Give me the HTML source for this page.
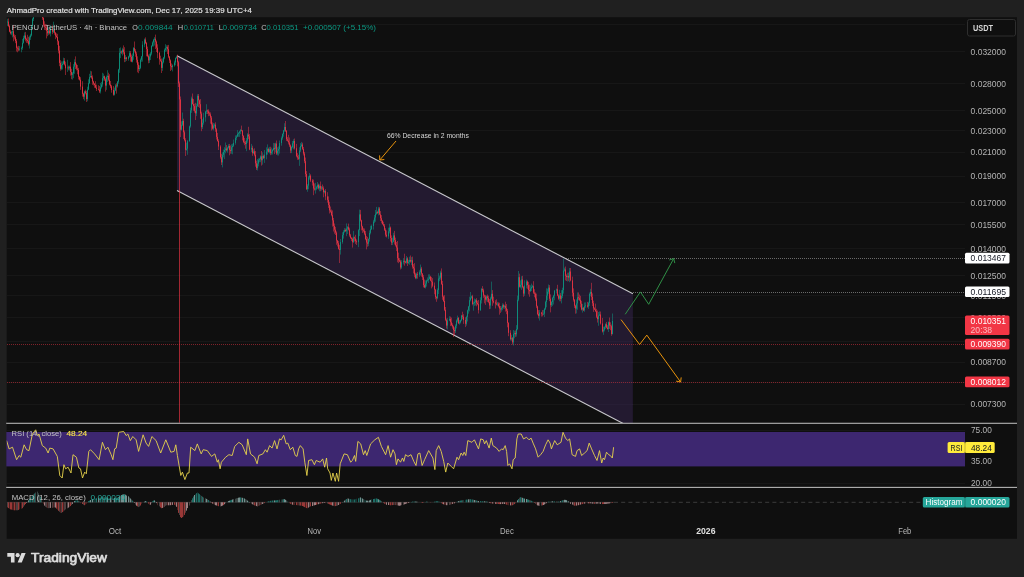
<!DOCTYPE html>
<html lang="en"><head><meta charset="utf-8"><title>PENGU / TetherUS 4h chart</title>
<style>html,body{margin:0;padding:0;background:#202020;}body{width:1024px;height:577px;overflow:hidden;position:relative;font-family:"Liberation Sans", Arial, sans-serif;}</style>
</head><body>
<svg width="1024" height="577" viewBox="0 0 1024 577" style="position:absolute;left:0;top:0;display:block;will-change:transform" font-family='"Liberation Sans", Arial, sans-serif'>
<rect x="0" y="0" width="1024" height="577" fill="#202020"/>
<rect x="6.7" y="17.2" width="1010.3" height="521.5999999999999" fill="#0f0f0f"/>
<defs>
<clipPath id="cm"><rect x="6.7" y="17.2" width="958.3" height="405.8"/></clipPath>
<clipPath id="cr"><rect x="6.7" y="424" width="958.3" height="63.5"/></clipPath>
</defs>
<g stroke="#171717" stroke-width="1" shape-rendering="crispEdges">
<line x1="6.7" x2="965" y1="24.0" y2="24.0"/>
<line x1="6.7" x2="965" y1="51.8" y2="51.8"/>
<line x1="6.7" x2="965" y1="83.6" y2="83.6"/>
<line x1="6.7" x2="965" y1="110.7" y2="110.7"/>
<line x1="6.7" x2="965" y1="130.5" y2="130.5"/>
<line x1="6.7" x2="965" y1="152.2" y2="152.2"/>
<line x1="6.7" x2="965" y1="176.1" y2="176.1"/>
<line x1="6.7" x2="965" y1="202.6" y2="202.6"/>
<line x1="6.7" x2="965" y1="224.6" y2="224.6"/>
<line x1="6.7" x2="965" y1="248.9" y2="248.9"/>
<line x1="6.7" x2="965" y1="275.9" y2="275.9"/>
<line x1="6.7" x2="965" y1="295.8" y2="295.8"/>
<line x1="6.7" x2="965" y1="317.5" y2="317.5"/>
<line x1="6.7" x2="965" y1="341.3" y2="341.3"/>
<line x1="6.7" x2="965" y1="362.3" y2="362.3"/>
<line x1="6.7" x2="965" y1="382.3" y2="382.3"/>
<line x1="6.7" x2="965" y1="404.1" y2="404.1"/>
</g>
<g clip-path="url(#cm)">
<polygon points="177,55.75 632.9,293.73 632.9,423 622.21,423 177,190.6" fill="#231a30"/>
<g stroke="#271e35" stroke-width="1" shape-rendering="crispEdges">
<line x1="177.0" x2="230.4" y1="83.6" y2="83.6"/>
<line x1="177.0" x2="282.2" y1="110.7" y2="110.7"/>
<line x1="177.0" x2="320.3" y1="130.5" y2="130.5"/>
<line x1="177.0" x2="361.8" y1="152.2" y2="152.2"/>
<line x1="177.0" x2="407.5" y1="176.1" y2="176.1"/>
<line x1="200.0" x2="458.3" y1="202.6" y2="202.6"/>
<line x1="242.2" x2="500.5" y1="224.6" y2="224.6"/>
<line x1="288.6" x2="547.0" y1="248.9" y2="248.9"/>
<line x1="340.4" x2="598.7" y1="275.9" y2="275.9"/>
<line x1="378.5" x2="632.9" y1="295.8" y2="295.8"/>
<line x1="420.0" x2="632.9" y1="317.5" y2="317.5"/>
<line x1="465.7" x2="632.9" y1="341.3" y2="341.3"/>
<line x1="505.9" x2="632.9" y1="362.3" y2="362.3"/>
<line x1="544.2" x2="632.9" y1="382.3" y2="382.3"/>
<line x1="586.0" x2="632.9" y1="404.1" y2="404.1"/>
</g>
<line x1="177" y1="55.75" x2="632.9" y2="293.73" stroke="#c8c8cc" stroke-width="1.1"/>
<line x1="177" y1="190.6" x2="626.21" y2="425.09" stroke="#c8c8cc" stroke-width="1.1"/>
<line x1="566" x2="965" y1="258.5" y2="258.5" stroke="#bdbdbd" stroke-width="1" stroke-dasharray="1 1" opacity="0.52" shape-rendering="crispEdges"/>
<line x1="633" x2="965" y1="292.5" y2="292.5" stroke="#bdbdbd" stroke-width="1" stroke-dasharray="1 1" opacity="0.52" shape-rendering="crispEdges"/>
<line x1="6.7" x2="965" y1="344.5" y2="344.5" stroke="#b02a36" stroke-width="1" stroke-dasharray="1 1" opacity="0.7" shape-rendering="crispEdges"/>
<line x1="6.7" x2="965" y1="382.5" y2="382.5" stroke="#b02a36" stroke-width="1" stroke-dasharray="1 1" opacity="0.7" shape-rendering="crispEdges"/>
<path d="M7.5 18.8V26.1M11.5 31.0V35.2M12.5 26.3V37.4M19.5 46.1V50.8M21.5 46.6V52.3M22.5 38.9V49.8M23.5 35.7V43.6M24.5 32.4V39.6M29.5 35.7V48.5M30.5 33.8V39.9M31.5 25.0V36.4M32.5 17.8V27.6M33.5 11.3V21.0M34.5 6.2V15.9M35.5 4.2V12.5M38.5 6.1V11.8M40.5 11.0V15.9M48.5 27.0V35.2M50.5 25.1V36.4M53.5 21.7V33.0M61.5 61.4V70.2M62.5 61.4V69.5M63.5 57.7V64.6M67.5 59.8V71.9M69.5 65.5V70.5M72.5 72.0V79.6M73.5 64.1V78.2M74.5 59.3V73.8M84.5 90.6V100.7M87.5 86.7V101.3M88.5 79.3V90.2M89.5 73.8V84.1M90.5 70.8V77.9M100.5 82.9V93.5M101.5 81.9V88.6M102.5 72.8V86.7M103.5 73.6V80.6M106.5 75.5V89.9M107.5 70.2V82.1M114.5 87.6V95.5M115.5 84.1V91.2M117.5 81.0V87.6M118.5 68.8V83.6M119.5 48.1V72.8M120.5 47.4V58.1M122.5 47.8V55.6M125.5 55.1V61.8M128.5 55.8V60.7M129.5 50.9V57.7M132.5 53.4V62.4M133.5 47.1V59.8M139.5 65.3V71.0M140.5 58.4V69.2M141.5 55.9V61.8M142.5 41.2V61.6M144.5 38.5V47.2M149.5 53.7V63.0M150.5 52.1V60.0M151.5 45.2V55.3M152.5 41.4V46.7M153.5 38.8V46.5M154.5 37.0V45.6M162.5 58.5V70.9M163.5 56.9V63.4M164.5 48.5V59.2M165.5 44.2V51.8M166.5 45.3V51.5M172.5 64.4V71.4M174.5 60.6V66.7M175.5 57.4V65.3M176.5 55.6V58.8M181.5 121.3V130.6M182.5 112.5V126.0M186.5 142.6V150.7M187.5 140.0V154.8M189.5 125.6V141.8M190.5 107.7V127.7M191.5 96.6V112.9M196.5 103.6V116.1M197.5 94.2V106.9M202.5 119.2V129.0M203.5 112.8V124.7M205.5 110.9V121.7M206.5 104.2V114.0M213.5 123.0V130.4M214.5 123.4V127.8M222.5 152.4V167.4M223.5 149.5V157.4M224.5 147.2V159.1M225.5 142.5V153.3M227.5 146.7V152.7M228.5 144.2V148.5M231.5 144.2V153.8M232.5 143.7V154.3M233.5 139.5V146.9M235.5 135.4V144.7M236.5 135.1V140.2M237.5 130.1V137.1M238.5 132.1V136.8M239.5 130.7V136.9M240.5 128.9V134.2M246.5 138.0V151.2M247.5 133.2V142.8M251.5 143.9V152.1M253.5 149.3V153.9M257.5 159.0V170.5M258.5 158.3V166.4M259.5 157.9V162.2M260.5 155.4V162.2M262.5 152.4V164.7M264.5 150.0V162.9M266.5 147.3V159.4M267.5 144.4V154.7M269.5 146.9V153.5M271.5 147.6V154.8M272.5 148.9V154.5M273.5 142.9V150.7M275.5 142.7V152.4M277.5 147.3V155.4M278.5 146.4V155.5M279.5 140.5V153.6M281.5 136.5V145.7M282.5 133.3V139.8M283.5 129.9V136.7M284.5 123.2V131.8M291.5 146.2V153.1M292.5 141.0V148.3M293.5 139.2V149.3M299.5 147.2V165.9M300.5 143.1V152.1M301.5 141.9V147.2M307.5 184.1V191.8M308.5 175.9V189.3M309.5 173.0V179.6M315.5 182.8V193.6M316.5 185.8V190.2M317.5 182.0V188.9M319.5 184.4V191.3M321.5 186.0V190.6M324.5 190.1V193.4M340.5 239.0V254.6M342.5 232.3V243.7M343.5 230.2V238.6M344.5 228.1V232.7M346.5 223.4V236.2M347.5 226.1V234.0M353.5 230.9V242.9M358.5 229.2V247.2M359.5 209.6V236.1M368.5 238.4V246.2M369.5 230.4V241.6M370.5 225.7V234.4M371.5 224.6V230.0M373.5 219.8V229.6M374.5 215.0V223.2M375.5 210.0V221.8M376.5 206.9V214.8M378.5 206.9V215.4M388.5 227.7V238.9M389.5 223.7V233.4M392.5 237.7V245.0M393.5 232.8V242.3M401.5 260.2V268.9M403.5 258.1V264.4M406.5 256.0V263.8M408.5 259.8V264.1M409.5 256.7V264.8M411.5 257.1V265.1M416.5 272.8V279.2M419.5 270.3V276.9M420.5 264.5V275.5M425.5 280.4V288.5M426.5 279.7V286.6M427.5 277.4V281.6M428.5 274.3V283.0M429.5 274.3V279.5M437.5 288.4V299.3M438.5 273.1V294.1M439.5 275.6V281.2M440.5 270.7V279.7M447.5 318.0V329.4M449.5 316.2V321.2M455.5 324.3V333.0M456.5 319.5V328.4M457.5 315.6V322.4M459.5 320.1V324.7M460.5 319.6V323.5M461.5 314.9V321.2M466.5 315.7V325.7M467.5 309.6V321.5M468.5 305.9V313.7M469.5 296.7V311.4M470.5 292.0V301.4M471.5 295.6V298.7M473.5 301.5V310.7M474.5 298.5V305.9M475.5 299.0V305.5M480.5 297.3V311.0M481.5 288.0V303.5M486.5 295.5V301.6M490.5 296.7V308.8M491.5 281.6V299.5M497.5 301.9V305.9M501.5 306.4V311.7M502.5 303.3V310.2M504.5 304.8V308.9M511.5 334.8V340.8M513.5 330.0V345.5M514.5 330.7V338.3M516.5 325.1V336.6M517.5 295.6V330.2M518.5 271.0V301.2M520.5 280.3V288.3M521.5 276.2V289.9M524.5 280.3V295.8M526.5 279.6V288.4M530.5 285.3V291.9M531.5 283.6V291.0M532.5 284.9V288.2M539.5 310.0V320.6M543.5 309.9V315.1M544.5 307.8V317.0M545.5 300.7V310.0M546.5 288.3V307.3M547.5 288.6V300.0M548.5 284.5V293.8M551.5 301.1V307.0M552.5 296.9V305.9M553.5 294.8V304.5M554.5 290.0V300.3M556.5 288.5V293.4M559.5 289.8V301.3M561.5 290.2V303.4M562.5 287.7V298.1M563.5 258.7V293.6M564.5 267.6V271.5M567.5 272.7V281.5M569.5 268.0V282.2M576.5 299.4V313.4M577.5 292.4V309.7M582.5 303.9V312.6M584.5 302.5V311.8M585.5 302.4V307.8M588.5 301.7V308.9M589.5 292.5V305.9M590.5 288.8V296.3M598.5 312.0V325.8M599.5 311.4V316.1M603.5 326.7V334.9M604.5 326.3V331.4M605.5 323.4V328.9M608.5 321.5V332.0M612.5 313.5V334.5" stroke="#0c9a84" stroke-width="1" fill="none" opacity="0.5"/>
<path d="M7.5 21.6V22.4M11.5 32.3V33.4M12.5 31.3V32.3M19.5 48.8V49.6M21.5 48.1V48.8M22.5 42.8V48.1M23.5 37.9V42.8M24.5 35.5V37.9M29.5 37.4V44.3M30.5 35.4V37.4M31.5 25.9V35.4M32.5 19.1V25.9M33.5 12.0V19.1M34.5 10.8V12.0M35.5 8.0V10.8M38.5 8.8V9.9M40.5 11.8V13.4M48.5 30.5V33.3M50.5 28.4V33.3M53.5 29.4V31.8M61.5 65.0V68.8M62.5 63.8V65.0M63.5 60.8V63.8M67.5 67.5V68.3M69.5 66.7V68.3M72.5 73.4V74.8M73.5 66.7V73.4M74.5 62.1V66.7M84.5 91.4V96.7M87.5 89.6V99.1M88.5 83.1V89.6M89.5 77.1V83.1M90.5 76.0V77.1M100.5 87.3V91.5M101.5 84.4V87.3M102.5 78.1V84.4M103.5 76.2V78.1M106.5 77.0V85.6M107.5 75.8V77.0M114.5 90.5V94.7M115.5 85.6V90.5M117.5 81.7V86.3M118.5 69.6V81.7M119.5 52.8V69.6M120.5 51.5V52.8M122.5 49.4V52.4M125.5 57.5V59.0M128.5 56.5V58.9M129.5 53.2V56.5M132.5 55.9V61.6M133.5 48.1V55.9M139.5 67.9V69.1M140.5 59.7V67.9M141.5 56.5V59.7M142.5 44.7V56.5M144.5 39.5V44.7M149.5 56.5V60.4M150.5 53.6V56.5M151.5 45.9V53.6M152.5 42.5V45.9M153.5 39.8V42.5M154.5 38.7V39.8M162.5 62.2V67.9M163.5 57.6V62.2M164.5 49.9V57.6M165.5 48.2V49.9M166.5 47.1V48.2M172.5 65.4V67.2M174.5 62.5V65.4M175.5 58.1V62.5M176.5 57.1V58.1M181.5 124.8V129.7M182.5 120.9V124.8M186.5 148.7V149.8M187.5 141.2V148.7M189.5 126.4V141.2M190.5 110.4V126.4M191.5 98.5V110.4M196.5 106.0V113.4M197.5 95.9V106.0M202.5 122.8V127.2M203.5 117.4V122.8M205.5 111.6V117.4M206.5 110.5V111.6M213.5 125.6V128.6M214.5 124.7V125.6M222.5 154.8V162.4M223.5 152.0V154.8M224.5 150.0V152.0M225.5 148.5V150.0M227.5 147.7V150.3M228.5 146.0V147.7M231.5 147.2V150.9M232.5 145.8V147.2M233.5 142.9V145.8M235.5 137.8V142.9M236.5 136.5V137.8M237.5 133.9V136.5M238.5 133.1V133.9M239.5 131.5V133.1M240.5 130.1V131.5M246.5 140.5V144.0M247.5 134.6V140.5M251.5 147.8V149.6M253.5 151.4V153.1M257.5 163.6V168.2M258.5 160.2V163.6M259.5 159.2V160.2M260.5 156.4V159.2M262.5 156.0V160.3M264.5 154.7V158.1M266.5 151.6V154.7M267.5 149.0V151.6M269.5 149.2V151.9M271.5 151.7V153.2M272.5 150.0V151.7M273.5 147.9V150.0M275.5 143.6V148.8M277.5 150.7V153.5M278.5 149.0V150.7M279.5 143.1V149.0M281.5 138.2V143.1M282.5 134.1V138.2M283.5 130.5V134.1M284.5 127.0V130.5M291.5 147.0V150.5M292.5 143.2V147.0M293.5 141.0V143.2M299.5 150.4V158.8M300.5 146.0V150.4M301.5 144.5V146.0M307.5 185.6V189.2M308.5 177.4V185.6M309.5 175.7V177.4M315.5 188.6V189.5M316.5 187.2V188.6M317.5 184.8V187.2M319.5 185.9V188.3M321.5 187.5V188.7M324.5 191.1V192.2M340.5 242.1V249.9M342.5 235.1V242.1M343.5 231.8V235.1M344.5 230.0V231.8M346.5 228.6V231.2M347.5 227.2V228.6M353.5 237.3V242.2M358.5 230.2V242.2M359.5 214.4V230.2M368.5 239.0V243.7M369.5 232.9V239.0M370.5 229.1V232.9M371.5 226.0V229.1M373.5 221.5V226.0M374.5 217.5V221.5M375.5 213.8V217.5M376.5 212.2V213.8M378.5 208.5V213.0M388.5 231.4V236.4M389.5 227.6V231.4M392.5 241.7V242.6M393.5 235.4V241.7M401.5 262.3V267.5M403.5 260.8V262.3M406.5 258.4V262.6M408.5 261.9V262.9M409.5 260.1V261.9M411.5 260.3V261.5M416.5 273.9V278.1M419.5 272.3V274.7M420.5 268.6V272.3M425.5 283.6V287.4M426.5 280.6V283.6M427.5 279.8V280.6M428.5 278.9V279.8M429.5 276.7V278.9M437.5 290.1V298.2M438.5 278.6V290.1M439.5 277.7V278.6M440.5 272.6V277.7M447.5 320.5V325.6M449.5 318.9V320.5M455.5 325.8V331.2M456.5 320.7V325.8M457.5 318.0V320.7M459.5 322.4V323.3M460.5 320.3V322.4M461.5 315.5V320.3M466.5 316.9V323.8M467.5 310.4V316.9M468.5 306.6V310.4M469.5 300.2V306.6M470.5 297.7V300.2M471.5 296.4V297.7M473.5 303.3V304.0M474.5 301.9V303.3M475.5 300.2V301.9M480.5 300.3V310.1M481.5 289.0V300.3M486.5 296.4V299.7M490.5 298.5V305.5M491.5 293.8V298.5M497.5 303.7V304.4M501.5 308.1V309.5M502.5 305.1V308.1M504.5 305.8V306.8M511.5 338.2V339.2M513.5 334.1V342.4M514.5 333.0V334.1M516.5 329.0V334.3M517.5 299.7V329.0M518.5 277.2V299.7M520.5 284.9V286.8M521.5 279.5V284.9M524.5 285.5V293.6M526.5 281.5V285.5M530.5 288.5V291.2M531.5 287.0V288.5M532.5 286.2V287.0M539.5 312.6V315.9M543.5 313.7V314.4M544.5 308.8V313.7M545.5 302.1V308.8M546.5 295.7V302.1M547.5 291.7V295.7M548.5 287.6V291.7M551.5 302.0V305.2M552.5 298.0V302.0M553.5 295.7V298.0M554.5 290.7V295.7M556.5 289.3V290.7M559.5 295.4V298.7M561.5 296.0V298.9M562.5 290.1V296.0M563.5 270.6V290.1M564.5 269.5V270.6M567.5 276.0V277.1M569.5 271.5V277.6M576.5 303.4V308.6M577.5 297.3V303.4M582.5 307.8V309.5M584.5 306.2V310.4M585.5 305.4V306.2M588.5 302.9V306.7M589.5 293.9V302.9M590.5 291.9V293.9M598.5 315.4V319.2M599.5 314.5V315.4M603.5 329.7V331.5M604.5 327.2V329.7M605.5 324.2V327.2M608.5 322.2V329.0M612.5 321.0V334.0" stroke="#0c9a84" stroke-width="1" fill="none" opacity="0.8"/>
<path d="M8.5 18.5V27.2M9.5 24.7V32.3M10.5 30.0V34.5M13.5 25.0V41.3M14.5 34.4V39.5M15.5 35.0V43.2M16.5 39.1V51.5M17.5 46.4V52.3M18.5 45.8V51.2M25.5 31.9V41.4M26.5 37.7V42.9M27.5 34.8V43.2M28.5 36.8V45.6M37.5 5.2V15.2M39.5 6.7V14.4M41.5 9.4V16.8M42.5 12.3V19.9M43.5 13.7V26.5M44.5 21.3V30.0M45.5 23.9V30.2M46.5 24.4V38.4M47.5 27.5V36.2M49.5 29.2V34.5M52.5 25.4V34.2M54.5 28.3V34.7M55.5 32.0V39.2M56.5 33.3V37.8M57.5 33.8V44.9M58.5 40.5V53.4M59.5 45.8V66.2M60.5 60.2V70.7M64.5 58.1V65.5M65.5 61.6V75.0M68.5 65.7V70.3M70.5 62.1V75.6M71.5 68.8V79.2M75.5 56.4V69.0M76.5 63.5V70.4M77.5 65.0V74.3M78.5 67.9V79.5M79.5 76.0V80.6M80.5 77.2V89.8M82.5 81.2V96.6M83.5 92.8V99.2M85.5 89.6V94.4M86.5 90.8V102.0M91.5 71.3V78.8M92.5 75.4V84.9M93.5 80.7V85.5M94.5 83.1V87.8M95.5 81.2V88.3M96.5 84.6V91.0M98.5 85.2V90.4M99.5 86.0V93.0M104.5 75.6V80.9M105.5 77.5V91.6M108.5 72.7V81.1M109.5 74.2V85.4M110.5 81.0V88.2M111.5 84.9V92.7M113.5 86.1V95.7M116.5 83.3V93.6M121.5 50.5V54.1M123.5 45.4V54.3M124.5 47.2V62.2M126.5 56.8V60.8M130.5 51.1V61.6M131.5 54.6V62.2M134.5 41.5V52.5M135.5 49.1V56.8M136.5 51.8V62.6M137.5 56.3V72.3M138.5 62.2V73.2M145.5 37.4V44.0M146.5 41.9V56.3M147.5 46.6V57.2M148.5 54.6V63.3M155.5 34.6V49.0M156.5 40.5V52.0M157.5 44.3V58.2M159.5 51.8V64.7M160.5 55.7V61.8M161.5 58.5V73.0M167.5 45.3V54.0M168.5 44.9V58.2M169.5 56.0V63.0M170.5 59.4V71.0M171.5 63.4V69.8M177.5 54.6V66.3M178.5 60.8V87.0M179.5 81.5V422.5M180.5 96.5V137.1M183.5 118.7V139.0M184.5 130.5V141.4M185.5 138.2V156.0M192.5 93.5V104.6M193.5 99.0V110.8M194.5 103.7V112.7M195.5 102.8V120.0M198.5 94.0V107.0M199.5 99.5V107.9M200.5 99.1V118.8M201.5 111.6V131.2M207.5 109.5V114.0M208.5 109.3V116.2M209.5 111.6V116.0M210.5 112.4V123.7M211.5 116.0V130.5M212.5 122.4V129.6M215.5 122.3V131.8M216.5 128.2V139.5M217.5 132.9V141.7M218.5 139.2V150.0M220.5 145.2V158.7M221.5 153.8V165.0M226.5 145.0V151.4M229.5 143.9V155.3M230.5 145.4V153.7M241.5 125.6V131.4M242.5 130.0V140.4M243.5 135.2V143.2M244.5 137.9V145.2M245.5 140.9V148.7M248.5 126.8V139.2M249.5 134.1V150.2M252.5 145.7V155.8M254.5 148.3V156.3M255.5 151.0V166.7M256.5 160.6V170.0M261.5 151.0V165.6M263.5 154.6V159.0M268.5 147.7V152.7M270.5 146.7V155.2M274.5 143.2V154.1M276.5 140.5V154.9M285.5 121.0V132.0M286.5 130.1V141.0M287.5 137.1V141.6M288.5 134.8V144.4M289.5 137.5V147.1M290.5 144.4V153.2M294.5 138.5V149.6M296.5 143.9V157.3M297.5 153.1V159.8M298.5 154.8V159.9M302.5 142.7V149.9M303.5 147.0V155.5M304.5 151.9V163.2M305.5 157.5V176.8M306.5 171.1V189.9M310.5 174.3V182.0M312.5 179.1V185.6M313.5 179.6V195.2M314.5 183.5V190.6M318.5 183.6V189.5M320.5 181.5V191.2M322.5 184.5V189.9M323.5 186.4V197.3M325.5 189.1V200.2M327.5 192.2V202.6M328.5 196.4V207.9M329.5 201.8V213.5M330.5 206.5V212.7M331.5 209.5V216.3M332.5 210.4V226.6M333.5 217.9V231.5M334.5 223.5V233.8M335.5 226.9V235.0M336.5 231.3V244.8M337.5 239.9V246.5M338.5 241.0V249.6M339.5 244.9V263.0M345.5 228.5V231.9M348.5 223.6V230.5M349.5 227.6V236.8M350.5 233.9V238.8M351.5 237.2V241.1M352.5 237.6V247.6M354.5 236.5V241.5M355.5 234.8V243.9M356.5 239.4V245.0M360.5 209.9V221.5M361.5 219.7V230.4M362.5 225.7V232.9M363.5 228.2V232.4M364.5 228.5V235.2M365.5 231.0V240.2M366.5 235.9V249.4M367.5 236.9V246.7M377.5 210.7V213.9M379.5 207.1V215.2M380.5 211.1V221.0M381.5 215.1V223.3M382.5 220.2V224.7M383.5 221.8V226.5M384.5 224.0V231.0M385.5 228.2V236.7M386.5 230.4V237.5M390.5 226.5V241.5M391.5 235.4V245.1M394.5 230.9V244.5M395.5 237.6V246.5M396.5 242.0V251.1M397.5 241.0V262.3M398.5 252.6V263.2M399.5 258.1V262.1M400.5 259.8V269.5M404.5 253.7V265.7M405.5 260.8V263.3M407.5 257.2V266.0M410.5 255.5V262.7M412.5 256.6V268.7M413.5 264.1V273.4M414.5 263.1V277.2M415.5 272.7V279.2M417.5 271.9V278.7M421.5 266.9V276.7M422.5 273.0V280.0M423.5 275.1V287.4M424.5 279.5V288.1M430.5 275.8V281.2M431.5 276.9V288.4M432.5 278.1V287.2M434.5 282.5V294.3M435.5 288.9V299.3M436.5 296.2V301.8M441.5 268.4V284.9M442.5 280.9V299.8M443.5 295.5V302.0M444.5 295.2V311.1M445.5 307.0V321.2M446.5 318.5V328.6M450.5 316.6V326.1M451.5 317.6V326.2M452.5 323.3V328.7M453.5 325.6V337.0M454.5 327.4V335.1M458.5 317.0V324.0M462.5 311.7V319.2M463.5 314.2V323.9M465.5 317.3V327.1M472.5 294.8V305.3M476.5 298.1V306.3M477.5 300.7V305.2M478.5 300.0V313.5M482.5 286.1V292.3M483.5 288.6V297.8M484.5 294.6V303.3M485.5 295.1V304.9M487.5 294.5V302.1M488.5 295.7V303.2M489.5 299.0V309.1M492.5 290.1V305.8M493.5 296.7V303.4M495.5 300.2V308.5M496.5 299.3V305.3M498.5 302.3V307.4M499.5 302.7V314.7M500.5 306.0V312.9M503.5 303.7V308.6M505.5 301.7V311.6M506.5 304.0V314.2M507.5 308.9V327.3M508.5 322.2V336.2M510.5 330.2V340.5M512.5 337.0V344.5M515.5 330.5V336.8M519.5 273.6V287.6M522.5 275.8V288.3M523.5 285.9V296.8M527.5 280.5V288.8M528.5 281.9V294.4M529.5 284.6V296.8M533.5 281.2V293.9M534.5 289.2V297.2M535.5 292.4V300.7M536.5 293.6V308.2M537.5 305.6V315.2M538.5 310.1V318.4M541.5 311.9V316.6M542.5 310.1V316.4M549.5 285.1V301.2M550.5 294.4V312.4M557.5 284.8V296.2M558.5 294.3V299.8M560.5 292.9V301.3M565.5 266.5V280.4M566.5 274.4V281.0M568.5 272.6V281.2M570.5 268.0V281.3M572.5 276.6V296.5M573.5 288.4V301.6M574.5 299.0V307.9M575.5 304.8V313.7M578.5 292.4V300.2M579.5 294.5V301.1M580.5 295.8V307.4M581.5 300.8V310.4M583.5 306.9V311.1M587.5 301.9V307.7M591.5 282.8V300.0M592.5 293.4V306.1M593.5 300.7V311.9M594.5 307.3V310.1M595.5 303.6V312.1M596.5 308.8V318.1M597.5 310.5V322.6M600.5 311.5V324.6M602.5 317.9V332.5M606.5 321.9V328.3M607.5 325.2V329.7M609.5 317.5V328.9M610.5 322.3V330.2M611.5 324.6V335.8" stroke="#f23645" stroke-width="1" fill="none" opacity="0.5"/>
<path d="M8.5 21.6V26.0M9.5 26.0V31.6M10.5 31.6V33.4M13.5 31.3V36.4M14.5 36.4V37.3M15.5 37.3V41.1M16.5 41.1V47.8M17.5 47.8V48.5M18.5 48.5V49.6M25.5 35.5V39.2M26.5 39.2V40.1M27.5 40.1V41.2M28.5 41.2V44.3M37.5 8.0V9.9M39.5 8.8V13.4M41.5 11.8V15.1M42.5 15.1V18.1M43.5 18.1V24.7M44.5 24.7V26.8M45.5 26.8V27.7M46.5 27.7V30.8M47.5 30.8V33.3M49.5 30.5V33.3M52.5 28.4V31.8M54.5 29.4V32.8M55.5 32.8V35.7M56.5 35.7V37.0M57.5 37.0V41.3M58.5 41.3V50.6M59.5 50.6V62.9M60.5 62.9V68.8M64.5 60.8V64.5M65.5 64.5V68.3M68.5 67.5V68.3M70.5 66.7V72.0M71.5 72.0V74.8M75.5 62.1V64.7M76.5 64.7V68.6M77.5 68.6V69.8M78.5 69.8V76.9M79.5 76.9V79.7M80.5 79.7V86.6M82.5 86.6V93.8M83.5 93.8V96.7M85.5 91.4V93.1M86.5 93.1V99.1M91.5 76.0V77.5M92.5 77.5V81.5M93.5 81.5V83.7M94.5 83.7V85.1M95.5 85.1V87.6M96.5 87.6V88.9M98.5 88.9V89.6M99.5 89.6V91.5M104.5 76.2V79.3M105.5 79.3V85.6M108.5 75.8V79.7M109.5 79.7V84.5M110.5 84.5V86.3M111.5 86.3V90.0M113.5 90.0V94.7M116.5 85.6V86.3M121.5 51.5V52.4M123.5 49.4V52.3M124.5 52.3V59.0M126.5 57.5V58.9M130.5 53.2V56.8M131.5 56.8V61.6M134.5 48.1V50.9M135.5 50.9V53.7M136.5 53.7V59.8M137.5 59.8V64.8M138.5 64.8V69.1M145.5 39.5V43.0M146.5 43.0V49.1M147.5 49.1V56.1M148.5 56.1V60.4M155.5 38.7V41.7M156.5 41.7V47.7M157.5 47.7V52.9M159.5 52.9V59.4M160.5 59.4V60.8M161.5 60.8V67.9M167.5 47.1V49.2M168.5 49.2V56.7M169.5 56.7V60.4M170.5 60.4V66.2M171.5 66.2V67.2M177.5 57.1V62.2M178.5 62.2V83.4M179.5 83.4V99.4M180.5 99.4V129.7M183.5 120.9V132.3M184.5 132.3V140.1M185.5 140.1V149.8M192.5 98.5V104.0M193.5 104.0V106.1M194.5 106.1V110.9M195.5 110.9V113.4M198.5 95.9V100.4M199.5 100.4V104.2M200.5 104.2V113.6M201.5 113.6V127.2M207.5 110.5V111.4M208.5 111.4V113.4M209.5 113.4V114.4M210.5 114.4V117.6M211.5 117.6V124.4M212.5 124.4V128.6M215.5 124.7V129.3M216.5 129.3V136.9M217.5 136.9V141.0M218.5 141.0V146.5M220.5 146.5V157.2M221.5 157.2V162.4M226.5 148.5V150.3M229.5 146.0V149.9M230.5 149.9V150.9M241.5 130.1V130.7M242.5 130.7V135.9M243.5 135.9V142.0M244.5 142.0V142.7M245.5 142.7V144.0M248.5 134.6V136.4M249.5 136.4V149.6M252.5 147.8V153.1M254.5 151.4V154.8M255.5 154.8V163.3M256.5 163.3V168.2M261.5 156.4V160.3M263.5 156.0V158.1M268.5 149.0V151.9M270.5 149.2V153.2M274.5 147.9V148.8M276.5 143.6V153.5M285.5 127.0V130.8M286.5 130.8V139.3M287.5 139.3V140.7M288.5 140.7V142.4M289.5 142.4V145.4M290.5 145.4V150.5M294.5 141.0V148.3M296.5 148.3V156.1M297.5 156.1V157.5M298.5 157.5V158.8M302.5 144.5V148.9M303.5 148.9V153.6M304.5 153.6V161.2M305.5 161.2V174.0M306.5 174.0V189.2M310.5 175.7V180.6M312.5 180.6V182.5M313.5 182.5V188.5M314.5 188.5V189.5M318.5 184.8V188.3M320.5 185.9V188.7M322.5 187.5V188.3M323.5 188.3V192.2M325.5 191.1V196.4M327.5 196.4V199.9M328.5 199.9V205.0M329.5 205.0V210.4M330.5 210.4V211.6M331.5 211.6V215.1M332.5 215.1V220.4M333.5 220.4V225.9M334.5 225.9V229.7M335.5 229.7V232.6M336.5 232.6V240.5M337.5 240.5V243.3M338.5 243.3V248.9M339.5 248.9V249.9M345.5 230.0V231.2M348.5 227.2V229.6M349.5 229.6V235.4M350.5 235.4V237.8M351.5 237.8V239.0M352.5 239.0V242.2M354.5 237.3V238.4M355.5 238.4V241.2M356.5 241.2V242.2M360.5 214.4V220.4M361.5 220.4V226.5M362.5 226.5V229.8M363.5 229.8V230.7M364.5 230.7V233.7M365.5 233.7V239.0M366.5 239.0V242.5M367.5 242.5V243.7M377.5 212.2V213.0M379.5 208.5V214.4M380.5 214.4V218.2M381.5 218.2V220.8M382.5 220.8V224.1M383.5 224.1V225.6M384.5 225.6V229.8M385.5 229.8V234.7M386.5 234.7V236.4M390.5 227.6V238.0M391.5 238.0V242.6M394.5 235.4V240.1M395.5 240.1V245.2M396.5 245.2V247.6M397.5 247.6V258.2M398.5 258.2V260.3M399.5 260.3V261.4M400.5 261.4V267.5M404.5 260.8V261.7M405.5 261.7V262.6M407.5 258.4V262.9M410.5 260.1V261.5M412.5 260.3V266.7M413.5 266.7V268.4M414.5 268.4V274.5M415.5 274.5V278.1M417.5 273.9V274.7M421.5 268.6V273.7M422.5 273.7V277.3M423.5 277.3V285.1M424.5 285.1V287.4M430.5 276.7V280.6M431.5 280.6V281.7M432.5 281.7V285.7M434.5 285.7V289.7M435.5 289.7V297.2M436.5 297.2V298.2M441.5 272.6V283.9M442.5 283.9V296.7M443.5 296.7V301.0M444.5 301.0V309.8M445.5 309.8V319.8M446.5 319.8V325.6M450.5 318.9V322.3M451.5 322.3V325.0M452.5 325.0V326.5M453.5 326.5V330.0M454.5 330.0V331.2M458.5 318.0V323.3M462.5 315.5V316.7M463.5 316.7V320.0M465.5 320.0V323.8M472.5 296.4V304.0M476.5 300.2V302.9M477.5 302.9V304.1M478.5 304.1V310.1M482.5 289.0V290.4M483.5 290.4V295.5M484.5 295.5V296.6M485.5 296.6V299.7M487.5 296.4V298.1M488.5 298.1V301.9M489.5 301.9V305.5M492.5 293.8V301.2M493.5 301.2V302.4M495.5 302.4V303.5M496.5 303.5V304.4M498.5 303.7V306.1M499.5 306.1V308.5M500.5 308.5V309.5M503.5 305.1V306.8M505.5 305.8V308.2M506.5 308.2V310.8M507.5 310.8V322.9M508.5 322.9V332.8M510.5 332.8V339.2M512.5 338.2V342.4M515.5 333.0V334.3M519.5 277.2V286.8M522.5 279.5V287.1M523.5 287.1V293.6M527.5 281.5V285.1M528.5 285.1V290.0M529.5 290.0V291.2M533.5 286.2V292.6M534.5 292.6V293.7M535.5 293.7V298.5M536.5 298.5V306.4M537.5 306.4V314.0M538.5 314.0V315.9M541.5 312.6V313.8M542.5 313.8V314.4M549.5 287.6V298.7M550.5 298.7V305.2M557.5 289.3V295.6M558.5 295.6V298.7M560.5 295.4V298.9M565.5 269.5V275.8M566.5 275.8V277.1M568.5 276.0V277.6M570.5 271.5V280.4M572.5 280.4V292.8M573.5 292.8V299.8M574.5 299.8V305.7M575.5 305.7V308.6M578.5 297.3V298.2M579.5 298.2V299.8M580.5 299.8V303.7M581.5 303.7V309.5M583.5 307.8V310.4M587.5 305.4V306.7M591.5 291.9V296.9M592.5 296.9V303.2M593.5 303.2V308.4M594.5 308.4V309.5M595.5 309.5V311.2M596.5 311.2V316.7M597.5 316.7V319.2M600.5 314.5V323.5M602.5 323.5V331.5M606.5 324.2V327.6M607.5 327.6V329.0M609.5 322.2V325.5M610.5 325.5V326.2M611.5 326.2V334.0" stroke="#f23645" stroke-width="1" fill="none" opacity="0.8"/>
<line x1="179.5" x2="179.5" y1="88" y2="423" stroke="#f23645" stroke-width="1" opacity="0.3"/>
<path d="M625.2 314.3 L640.4 291.9 L648.7 304.3 L673.7 258.6" stroke="#2f8f46" stroke-width="1" fill="none" stroke-linejoin="round"/>
<line x1="673.7" y1="258.6" x2="674.8" y2="263.1" stroke="#2f8f46" stroke-width="1"/>
<line x1="673.7" y1="258.6" x2="669.3" y2="260.0" stroke="#2f8f46" stroke-width="1"/>
<path d="M621.0 319.6 L639.6 344.5 L646.8 335.1 L680.6 382.0" stroke="#e8930c" stroke-width="1" fill="none" stroke-linejoin="round"/>
<line x1="680.6" y1="382.0" x2="676.1" y2="381.1" stroke="#e8930c" stroke-width="1"/>
<line x1="680.6" y1="382.0" x2="681.2" y2="377.4" stroke="#e8930c" stroke-width="1"/>
<path d="M396.0 141.0 L379.8 160.0" stroke="#e8930c" stroke-width="1" fill="none" stroke-linejoin="round"/>
<line x1="379.8" y1="160.0" x2="379.6" y2="155.4" stroke="#e8930c" stroke-width="1"/>
<line x1="379.8" y1="160.0" x2="384.3" y2="159.5" stroke="#e8930c" stroke-width="1"/>
</g>
<text x="386.9" y="137.9" font-size="7" fill="#d6d6d6" textLength="81.9" lengthAdjust="spacingAndGlyphs">66% Decrease in 2 months</text>
<rect x="6.2" y="422.75" width="1010.8" height="1.1" fill="#b4b4b4"/>
<rect x="6.2" y="486.85" width="1010.8" height="1.1" fill="#b4b4b4"/>
<rect x="6.3" y="432.0" width="958.7" height="34.4" fill="#3d2770"/>
<g stroke="#171717" stroke-width="1" shape-rendering="crispEdges">
<line x1="6.7" x2="965" y1="430.0" y2="430.0"/>
<line x1="6.7" x2="965" y1="483.0" y2="483.0"/>
</g>
<path d="M6.6 440.6 L9.1 448.9 L12.5 447.2 L16.6 459.7 L19.1 455.5 L20.8 457.2 L24.1 444.8 L26.6 449.7 L29.0 450.6 L32.4 434.0 L35.7 429.8 L37.4 435.6 L39.0 434.0 L42.3 445.6 L45.7 448.1 L48.1 453.0 L49.8 448.1 L53.1 448.9 L57.3 456.4 L59.8 475.5 L62.2 478.0 L63.9 464.7 L65.6 468.8 L68.1 467.2 L71.0 473.0 L73.0 454.7 L76.4 457.2 L78.9 468.0 L80.5 468.8 L82.5 478.0 L84.7 472.1 L86.3 473.8 L88.8 451.4 L90.5 449.7 L94.6 453.9 L99.1 459.7 L102.4 442.3 L105.4 449.7 L107.9 447.2 L111.2 454.7 L112.9 459.7 L114.6 448.9 L116.2 448.1 L118.7 432.3 L123.7 431.5 L126.2 435.6 L127.8 434.0 L130.3 440.6 L132.8 436.5 L136.1 439.8 L138.6 451.4 L143.1 434.8 L146.1 443.1 L148.6 446.4 L151.9 436.5 L156.1 440.6 L160.7 453.0 L165.8 439.8 L170.8 452.2 L174.1 451.4 L175.8 444.8 L177.4 455.5 L179.1 465.5 L180.8 475.5 L182.4 472.1 L184.9 479.6 L187.4 473.0 L189.0 473.0 L190.7 447.2 L194.9 450.6 L197.3 443.9 L201.2 453.9 L203.2 449.7 L207.3 450.6 L211.5 456.4 L214.8 453.9 L217.3 462.2 L218.4 459.7 L220.1 468.8 L221.4 462.2 L225.6 457.2 L228.9 454.7 L232.2 455.5 L234.7 446.4 L238.9 442.3 L242.2 444.8 L246.3 454.7 L247.7 438.9 L250.5 453.9 L254.6 457.2 L257.1 463.8 L258.8 455.5 L262.9 453.9 L265.4 449.7 L267.1 452.2 L269.6 445.6 L272.1 448.1 L274.6 440.6 L277.0 448.9 L279.5 438.9 L281.2 439.8 L283.7 435.3 L286.2 443.9 L287.8 443.1 L290.3 449.7 L292.8 447.2 L295.3 455.5 L297.0 456.4 L298.6 448.9 L300.3 445.6 L303.1 448.9 L304.8 462.2 L306.9 475.5 L308.6 460.5 L311.9 459.7 L314.4 464.7 L316.1 460.5 L320.2 462.2 L322.7 458.9 L324.7 467.2 L326.5 458.0 L327.7 468.8 L330.0 473.0 L331.3 480.4 L332.9 473.0 L335.3 481.3 L336.6 473.0 L338.6 481.3 L340.2 463.8 L344.1 453.9 L347.4 454.7 L350.7 462.2 L352.4 460.5 L354.5 455.5 L355.7 461.4 L357.9 441.4 L360.7 443.9 L363.5 454.7 L365.2 450.6 L366.8 455.5 L370.6 443.9 L374.8 439.8 L378.4 437.3 L381.4 446.4 L385.6 454.7 L388.1 445.6 L390.6 457.2 L393.0 449.7 L395.0 453.9 L396.4 464.7 L398.0 458.9 L400.5 462.2 L402.5 458.0 L403.8 461.4 L405.5 454.7 L408.0 456.4 L411.0 454.7 L413.8 461.4 L416.0 465.5 L417.9 453.9 L419.9 453.0 L422.1 465.5 L424.6 459.7 L428.7 450.6 L432.9 458.0 L434.9 469.6 L436.2 450.6 L438.7 445.6 L441.2 451.4 L443.7 461.4 L445.7 472.1 L447.8 463.0 L451.1 466.3 L453.6 468.8 L457.0 457.2 L458.6 459.7 L461.1 453.0 L462.8 455.5 L464.1 452.2 L465.8 455.5 L467.8 440.6 L471.9 442.3 L474.4 439.8 L478.5 448.9 L480.7 438.9 L483.3 439.8 L484.6 443.9 L486.3 440.6 L489.1 448.1 L491.3 438.1 L492.9 445.6 L496.6 448.1 L499.1 451.4 L501.6 448.9 L503.2 449.7 L505.2 445.6 L506.6 451.4 L507.9 465.5 L509.6 463.8 L512.0 468.8 L513.2 459.7 L515.2 458.0 L516.9 438.9 L518.2 434.0 L521.2 434.0 L523.5 438.9 L526.5 437.3 L529.0 439.8 L531.1 438.1 L533.1 443.1 L535.6 448.9 L538.1 457.2 L540.6 454.7 L543.1 451.4 L545.6 444.8 L548.1 439.8 L550.1 443.1 L551.4 448.9 L554.7 440.6 L557.2 444.8 L561.0 442.3 L563.0 432.3 L565.5 438.1 L567.7 440.6 L569.6 438.9 L571.0 447.2 L572.1 454.7 L575.5 456.4 L577.1 450.6 L579.6 448.9 L581.6 455.5 L584.6 453.0 L587.1 450.6 L589.2 443.1 L591.6 448.9 L594.5 455.5 L597.0 460.5 L599.5 450.6 L601.7 463.0 L603.2 458.0 L604.5 459.7 L606.5 452.2 L608.7 454.7 L610.3 455.5 L612.3 458.0 L613.6 447.2" stroke="#e8d44d" stroke-width="0.9" fill="none" stroke-linejoin="round" clip-path="url(#cr)"/>
<line x1="6.7" x2="614" y1="502.3" y2="502.3" stroke="#3a3a3a" stroke-width="0.6"/>
<line x1="614" x2="923" y1="502.3" y2="502.3" stroke="#505050" stroke-width="0.7" stroke-dasharray="4 3.2"/>
<path d="M7.5 502.3V507.4M16.5 502.3V510.3M17.5 502.3V510.3M23.5 502.3V506.8M45.5 502.3V506.7M46.5 502.3V507.4M48.5 502.3V508.2M49.5 502.3V508.1M52.5 502.3V507.8M54.5 502.3V507.4M59.5 502.3V511.8M61.5 502.3V512.9M64.5 502.3V510.4M65.5 502.3V509.4M67.5 502.3V508.3M71.5 502.3V505.0M83.5 502.3V504.7M135.5 502.3V504.6M138.5 502.3V507.1M139.5 502.3V506.5M151.5 502.3V503.2M159.5 502.3V506.3M164.5 502.3V506.9M165.5 502.3V505.8M166.5 502.3V505.3M169.5 502.3V505.3M179.5 502.3V515.0M185.5 502.3V512.7M189.5 502.3V505.5M214.5 502.3V504.6M220.5 502.3V506.5M225.5 502.3V503.3M249.5 502.3V503.1M251.5 502.3V503.7M253.5 502.3V504.9M257.5 502.3V506.5M259.5 502.3V505.5M261.5 502.3V504.5M263.5 502.3V503.6M299.5 502.3V505.5M309.5 502.3V506.9M313.5 502.3V505.6M319.5 502.3V503.9M323.5 502.3V503.1M327.5 502.3V503.5M333.5 502.3V505.9M336.5 502.3V505.9M337.5 502.3V505.6M342.5 502.3V502.7M383.5 502.3V503.1M393.5 502.3V505.0M395.5 502.3V505.1M397.5 502.3V505.4M401.5 502.3V505.2M403.5 502.3V504.8M409.5 502.3V502.7M423.5 502.3V502.7M441.5 502.3V503.3M447.5 502.3V505.2M449.5 502.3V504.9M450.5 502.3V504.6M497.5 502.3V503.9M503.5 502.3V503.8M513.5 502.3V504.7M535.5 502.3V503.8M539.5 502.3V505.9M541.5 502.3V505.6M545.5 502.3V503.9M573.5 502.3V505.3M591.5 502.3V503.5M593.5 502.3V503.7M595.5 502.3V503.7M598.5 502.3V503.6M599.5 502.3V503.8M610.5 502.3V503.2" stroke="#f7c3c6" stroke-width="1" fill="none" opacity="0.27"/>
<path d="M8.5 502.3V508.1M10.5 502.3V509.4M11.5 502.3V509.6M14.5 502.3V510.3M18.5 502.3V509.9M22.5 502.3V508.2M24.5 502.3V505.3M25.5 502.3V504.0M56.5 502.3V508.6M58.5 502.3V510.8M62.5 502.3V512.1M70.5 502.3V506.1M82.5 502.3V504.0M84.5 502.3V505.2M137.5 502.3V506.4M140.5 502.3V505.5M148.5 502.3V503.6M160.5 502.3V507.4M161.5 502.3V508.2M174.5 502.3V504.8M178.5 502.3V512.9M180.5 502.3V517.2M181.5 502.3V518.0M182.5 502.3V517.2M184.5 502.3V514.9M211.5 502.3V502.8M218.5 502.3V506.2M223.5 502.3V505.1M254.5 502.3V505.4M264.5 502.3V503.1M290.5 502.3V503.8M296.5 502.3V505.1M300.5 502.3V505.6M302.5 502.3V506.0M303.5 502.3V506.5M304.5 502.3V507.1M306.5 502.3V508.1M310.5 502.3V506.4M316.5 502.3V504.7M320.5 502.3V503.6M328.5 502.3V503.8M329.5 502.3V504.3M330.5 502.3V504.8M331.5 502.3V505.2M335.5 502.3V506.1M340.5 502.3V503.8M384.5 502.3V503.7M390.5 502.3V505.3M392.5 502.3V505.1M422.5 502.3V503.0M442.5 502.3V503.8M490.5 502.3V503.2M496.5 502.3V503.9M498.5 502.3V504.0M499.5 502.3V504.1M506.5 502.3V504.6M512.5 502.3V505.2M514.5 502.3V504.1M534.5 502.3V502.9M542.5 502.3V505.3M574.5 502.3V505.7M582.5 502.3V504.1M589.5 502.3V503.3M594.5 502.3V503.8M602.5 502.3V504.1M603.5 502.3V504.0M612.5 502.3V502.9" stroke="#ef5350" stroke-width="1" fill="none" opacity="0.62"/>
<path d="M9.5 502.3V508.8M12.5 502.3V509.9M13.5 502.3V510.2M15.5 502.3V510.3M19.5 502.3V509.3M21.5 502.3V508.8M43.5 502.3V503.9M47.5 502.3V508.1M53.5 502.3V507.6M57.5 502.3V509.7M60.5 502.3V512.9M63.5 502.3V511.4M69.5 502.3V506.9M80.5 502.3V503.2M85.5 502.3V504.5M86.5 502.3V503.8M87.5 502.3V502.6M141.5 502.3V503.9M149.5 502.3V504.7M157.5 502.3V505.2M163.5 502.3V507.5M167.5 502.3V505.3M171.5 502.3V505.1M175.5 502.3V505.6M177.5 502.3V510.0M183.5 502.3V516.5M190.5 502.3V502.8M213.5 502.3V504.1M217.5 502.3V505.9M255.5 502.3V505.8M258.5 502.3V506.0M260.5 502.3V505.0M289.5 502.3V503.3M291.5 502.3V504.3M293.5 502.3V504.9M294.5 502.3V505.0M297.5 502.3V505.3M298.5 502.3V505.4M301.5 502.3V505.7M305.5 502.3V507.6M307.5 502.3V508.3M317.5 502.3V504.4M321.5 502.3V503.4M325.5 502.3V503.2M334.5 502.3V506.2M339.5 502.3V504.4M385.5 502.3V504.2M389.5 502.3V505.1M391.5 502.3V505.2M394.5 502.3V505.0M396.5 502.3V505.2M407.5 502.3V503.2M421.5 502.3V502.8M430.5 502.3V502.8M440.5 502.3V502.6M444.5 502.3V504.7M445.5 502.3V504.9M451.5 502.3V504.3M453.5 502.3V503.6M455.5 502.3V502.8M491.5 502.3V503.4M493.5 502.3V503.7M501.5 502.3V504.0M505.5 502.3V504.2M507.5 502.3V504.9M508.5 502.3V505.3M511.5 502.3V505.5M515.5 502.3V503.3M536.5 502.3V504.7M575.5 502.3V505.8M577.5 502.3V505.4M579.5 502.3V504.9M581.5 502.3V504.3M583.5 502.3V503.8M585.5 502.3V503.5M587.5 502.3V503.3M611.5 502.3V503.1" stroke="#ef5350" stroke-width="1" fill="none" opacity="0.27"/>
<path d="M26.5 502.3V502.9M44.5 502.3V505.6M50.5 502.3V507.9M55.5 502.3V507.6M68.5 502.3V507.6M72.5 502.3V503.9M134.5 502.3V502.9M136.5 502.3V505.7M150.5 502.3V504.7M156.5 502.3V503.1M162.5 502.3V507.9M168.5 502.3V505.3M170.5 502.3V505.2M172.5 502.3V504.9M176.5 502.3V506.8M186.5 502.3V510.6M187.5 502.3V508.1M212.5 502.3V503.6M215.5 502.3V505.2M216.5 502.3V505.5M221.5 502.3V506.1M222.5 502.3V505.6M224.5 502.3V504.2M252.5 502.3V504.3M256.5 502.3V506.1M262.5 502.3V504.0M292.5 502.3V504.7M308.5 502.3V507.6M312.5 502.3V506.0M314.5 502.3V505.3M315.5 502.3V505.0M318.5 502.3V504.2M322.5 502.3V503.2M324.5 502.3V502.9M332.5 502.3V505.6M338.5 502.3V505.0M386.5 502.3V504.8M388.5 502.3V505.0M398.5 502.3V505.6M399.5 502.3V505.8M400.5 502.3V505.5M404.5 502.3V504.3M405.5 502.3V503.9M406.5 502.3V503.5M408.5 502.3V503.0M443.5 502.3V504.3M446.5 502.3V505.2M452.5 502.3V503.9M454.5 502.3V503.3M489.5 502.3V502.9M492.5 502.3V503.5M495.5 502.3V503.8M500.5 502.3V504.1M502.5 502.3V503.9M504.5 502.3V504.0M510.5 502.3V505.4M537.5 502.3V505.4M538.5 502.3V505.6M543.5 502.3V505.0M544.5 502.3V504.4M546.5 502.3V503.2M570.5 502.3V503.8M572.5 502.3V504.6M576.5 502.3V505.6M578.5 502.3V505.2M580.5 502.3V504.6M584.5 502.3V503.6M588.5 502.3V503.3M590.5 502.3V503.3M592.5 502.3V503.6M596.5 502.3V503.6M597.5 502.3V503.5M600.5 502.3V503.9M604.5 502.3V503.9M605.5 502.3V503.9M606.5 502.3V503.8M607.5 502.3V503.6M608.5 502.3V503.5M609.5 502.3V503.4" stroke="#f7c3c6" stroke-width="1" fill="none" opacity="0.62"/>
<path d="M27.5 502.3V501.7M31.5 502.3V496.6M76.5 502.3V500.2M79.5 502.3V501.2M91.5 502.3V499.5M93.5 502.3V498.9M94.5 502.3V498.6M95.5 502.3V498.3M101.5 502.3V497.6M105.5 502.3V497.4M108.5 502.3V497.8M109.5 502.3V498.0M113.5 502.3V498.1M117.5 502.3V497.4M155.5 502.3V501.4M195.5 502.3V494.1M197.5 502.3V492.4M200.5 502.3V495.1M209.5 502.3V500.8M227.5 502.3V501.7M243.5 502.3V498.0M267.5 502.3V501.5M269.5 502.3V501.1M271.5 502.3V500.6M273.5 502.3V500.4M278.5 502.3V499.9M281.5 502.3V499.5M287.5 502.3V501.3M343.5 502.3V501.6M349.5 502.3V498.9M351.5 502.3V499.3M352.5 502.3V499.4M353.5 502.3V499.4M355.5 502.3V499.1M356.5 502.3V498.7M359.5 502.3V497.7M361.5 502.3V497.9M364.5 502.3V499.6M365.5 502.3V500.2M371.5 502.3V499.3M375.5 502.3V498.5M413.5 502.3V501.5M425.5 502.3V502.0M435.5 502.3V501.3M438.5 502.3V501.3M439.5 502.3V501.6M456.5 502.3V501.9M457.5 502.3V501.4M463.5 502.3V500.0M465.5 502.3V499.8M467.5 502.3V499.5M471.5 502.3V499.4M481.5 502.3V501.3M483.5 502.3V501.3M532.5 502.3V501.1M533.5 502.3V501.8M549.5 502.3V501.6M550.5 502.3V501.5M553.5 502.3V501.4M559.5 502.3V501.6M561.5 502.3V500.7M567.5 502.3V500.8" stroke="#26a69a" stroke-width="1" fill="none" opacity="0.27"/>
<path d="M28.5 502.3V500.3M74.5 502.3V501.1M90.5 502.3V500.0M92.5 502.3V499.1M98.5 502.3V497.8M107.5 502.3V497.7M110.5 502.3V498.1M114.5 502.3V497.9M119.5 502.3V496.4M121.5 502.3V495.1M122.5 502.3V494.6M123.5 502.3V494.4M125.5 502.3V494.7M126.5 502.3V495.5M128.5 502.3V496.3M130.5 502.3V498.5M144.5 502.3V501.7M145.5 502.3V501.1M154.5 502.3V500.4M194.5 502.3V495.0M206.5 502.3V498.9M210.5 502.3V501.7M228.5 502.3V501.1M229.5 502.3V500.7M232.5 502.3V499.5M238.5 502.3V497.7M239.5 502.3V497.5M242.5 502.3V497.8M244.5 502.3V498.5M247.5 502.3V500.6M274.5 502.3V500.4M284.5 502.3V499.2M285.5 502.3V499.8M344.5 502.3V500.6M348.5 502.3V498.6M360.5 502.3V497.4M362.5 502.3V498.5M366.5 502.3V500.6M367.5 502.3V500.7M369.5 502.3V500.4M370.5 502.3V499.9M378.5 502.3V499.3M415.5 502.3V501.6M416.5 502.3V501.7M458.5 502.3V501.1M468.5 502.3V499.3M474.5 502.3V500.0M478.5 502.3V501.0M484.5 502.3V501.3M517.5 502.3V500.3M522.5 502.3V497.8M524.5 502.3V498.6M526.5 502.3V499.0M552.5 502.3V501.3M560.5 502.3V501.1M564.5 502.3V499.8M565.5 502.3V499.9M566.5 502.3V500.2M568.5 502.3V501.4" stroke="#b2dfdb" stroke-width="1" fill="none" opacity="0.62"/>
<path d="M29.5 502.3V498.9M30.5 502.3V497.7M32.5 502.3V495.5M34.5 502.3V493.5M40.5 502.3V496.9M75.5 502.3V500.7M77.5 502.3V500.4M88.5 502.3V501.1M89.5 502.3V500.6M96.5 502.3V498.1M100.5 502.3V497.6M102.5 502.3V497.5M104.5 502.3V497.3M106.5 502.3V497.5M115.5 502.3V497.8M116.5 502.3V497.6M118.5 502.3V497.1M124.5 502.3V494.1M132.5 502.3V500.6M146.5 502.3V501.5M152.5 502.3V501.4M153.5 502.3V500.6M192.5 502.3V498.3M193.5 502.3V496.5M196.5 502.3V493.2M198.5 502.3V493.3M199.5 502.3V494.2M202.5 502.3V496.7M208.5 502.3V500.0M230.5 502.3V500.3M231.5 502.3V499.9M240.5 502.3V497.4M248.5 502.3V501.7M268.5 502.3V501.3M270.5 502.3V500.8M272.5 502.3V500.5M275.5 502.3V500.4M276.5 502.3V500.3M277.5 502.3V500.1M283.5 502.3V499.2M346.5 502.3V499.0M350.5 502.3V499.2M354.5 502.3V499.5M358.5 502.3V498.3M373.5 502.3V499.0M374.5 502.3V498.8M376.5 502.3V498.4M377.5 502.3V498.8M379.5 502.3V499.8M380.5 502.3V500.5M411.5 502.3V502.0M412.5 502.3V501.6M414.5 502.3V501.6M426.5 502.3V501.6M434.5 502.3V501.7M436.5 502.3V501.3M437.5 502.3V501.3M460.5 502.3V500.6M461.5 502.3V500.4M466.5 502.3V499.6M470.5 502.3V499.2M472.5 502.3V499.5M476.5 502.3V500.5M480.5 502.3V501.1M482.5 502.3V501.3M486.5 502.3V501.5M518.5 502.3V499.0M520.5 502.3V497.2M523.5 502.3V498.3M527.5 502.3V499.3M528.5 502.3V499.7M531.5 502.3V500.8M548.5 502.3V501.7M554.5 502.3V501.4M558.5 502.3V501.6M562.5 502.3V500.3" stroke="#26a69a" stroke-width="1" fill="none" opacity="0.62"/>
<path d="M33.5 502.3V494.4M35.5 502.3V492.5M37.5 502.3V491.6M38.5 502.3V493.3M39.5 502.3V495.0M41.5 502.3V499.5M78.5 502.3V500.8M99.5 502.3V497.7M103.5 502.3V497.4M111.5 502.3V498.3M120.5 502.3V495.7M129.5 502.3V497.4M131.5 502.3V499.5M133.5 502.3V501.7M191.5 502.3V500.1M201.5 502.3V495.9M203.5 502.3V497.5M205.5 502.3V498.3M207.5 502.3V499.4M233.5 502.3V499.1M235.5 502.3V498.7M236.5 502.3V498.3M237.5 502.3V498.0M241.5 502.3V497.6M245.5 502.3V499.1M246.5 502.3V499.7M279.5 502.3V499.7M282.5 502.3V499.4M286.5 502.3V500.4M345.5 502.3V499.7M347.5 502.3V498.4M363.5 502.3V499.0M368.5 502.3V500.8M381.5 502.3V501.2M417.5 502.3V501.7M427.5 502.3V501.7M459.5 502.3V500.8M462.5 502.3V500.2M469.5 502.3V499.2M473.5 502.3V499.7M475.5 502.3V500.2M477.5 502.3V500.8M485.5 502.3V501.4M487.5 502.3V501.6M519.5 502.3V497.7M521.5 502.3V497.4M529.5 502.3V500.1M530.5 502.3V500.4M551.5 502.3V501.3M556.5 502.3V501.5M557.5 502.3V501.6M563.5 502.3V500.0" stroke="#b2dfdb" stroke-width="1" fill="none" opacity="0.27"/>
<text x="970.6" y="54.8" font-size="8.5" fill="#b4b4b4" font-weight="400" textLength="35.4" lengthAdjust="spacingAndGlyphs">0.032000</text>
<text x="970.6" y="86.7" font-size="8.5" fill="#b4b4b4" font-weight="400" textLength="35.4" lengthAdjust="spacingAndGlyphs">0.028000</text>
<text x="970.6" y="113.7" font-size="8.5" fill="#b4b4b4" font-weight="400" textLength="35.4" lengthAdjust="spacingAndGlyphs">0.025000</text>
<text x="970.6" y="133.6" font-size="8.5" fill="#b4b4b4" font-weight="400" textLength="35.4" lengthAdjust="spacingAndGlyphs">0.023000</text>
<text x="970.6" y="155.3" font-size="8.5" fill="#b4b4b4" font-weight="400" textLength="35.4" lengthAdjust="spacingAndGlyphs">0.021000</text>
<text x="970.6" y="179.1" font-size="8.5" fill="#b4b4b4" font-weight="400" textLength="35.4" lengthAdjust="spacingAndGlyphs">0.019000</text>
<text x="970.6" y="205.6" font-size="8.5" fill="#b4b4b4" font-weight="400" textLength="35.4" lengthAdjust="spacingAndGlyphs">0.017000</text>
<text x="970.6" y="227.7" font-size="8.5" fill="#b4b4b4" font-weight="400" textLength="35.4" lengthAdjust="spacingAndGlyphs">0.015500</text>
<text x="970.6" y="251.9" font-size="8.5" fill="#b4b4b4" font-weight="400" textLength="35.4" lengthAdjust="spacingAndGlyphs">0.014000</text>
<text x="970.6" y="278.9" font-size="8.5" fill="#b4b4b4" font-weight="400" textLength="35.4" lengthAdjust="spacingAndGlyphs">0.012500</text>
<text x="970.6" y="298.8" font-size="8.5" fill="#b4b4b4" font-weight="400" textLength="35.4" lengthAdjust="spacingAndGlyphs">0.011500</text>
<text x="970.6" y="320.5" font-size="8.5" fill="#b4b4b4" font-weight="400" textLength="35.4" lengthAdjust="spacingAndGlyphs">0.010500</text>
<text x="970.6" y="365.3" font-size="8.5" fill="#b4b4b4" font-weight="400" textLength="35.4" lengthAdjust="spacingAndGlyphs">0.008700</text>
<text x="970.6" y="407.2" font-size="8.5" fill="#b4b4b4" font-weight="400" textLength="35.4" lengthAdjust="spacingAndGlyphs">0.007300</text>
<rect x="965" y="252.8" width="44.5" height="10.7" rx="1.5" fill="#ffffff"/>
<text x="970.6" y="261.2" font-size="8.5" fill="#131722" font-weight="400" textLength="35.4" lengthAdjust="spacingAndGlyphs">0.013467</text>
<rect x="965" y="286.4" width="44.5" height="10.7" rx="1.5" fill="#ffffff"/>
<text x="970.6" y="294.8" font-size="8.5" fill="#131722" font-weight="400" textLength="35.4" lengthAdjust="spacingAndGlyphs">0.011695</text>
<rect x="965" y="315.6" width="44.5" height="19.5" rx="1.5" fill="#f23645"/>
<text x="970.6" y="323.9" font-size="8.5" fill="#ffffff" font-weight="400" textLength="35.4" lengthAdjust="spacingAndGlyphs">0.010351</text>
<text x="970.6" y="333" font-size="8.5" fill="#fbb9bf" textLength="21.5" lengthAdjust="spacingAndGlyphs">20:38</text>
<rect x="965" y="338.8" width="44.5" height="10.7" rx="1.5" fill="#f23645"/>
<text x="970.6" y="347.2" font-size="8.5" fill="#ffffff" font-weight="400" textLength="35.4" lengthAdjust="spacingAndGlyphs">0.009390</text>
<rect x="965" y="376.6" width="44.5" height="10.7" rx="1.5" fill="#f23645"/>
<text x="970.6" y="385.0" font-size="8.5" fill="#ffffff" font-weight="400" textLength="35.4" lengthAdjust="spacingAndGlyphs">0.008012</text>
<rect x="967.5" y="19.5" width="48" height="16.5" rx="2" fill="#0f0f0f" stroke="#2e2e2e" stroke-width="1"/>
<text x="973" y="30.6" font-size="8.3" font-weight="700" fill="#d9d9d9" textLength="20" lengthAdjust="spacingAndGlyphs">USDT</text>
<text x="971" y="433.1" font-size="8.5" fill="#b4b4b4" font-weight="400" textLength="20.8" lengthAdjust="spacingAndGlyphs">75.00</text>
<text x="971" y="463.6" font-size="8.5" fill="#b4b4b4" font-weight="400" textLength="20.8" lengthAdjust="spacingAndGlyphs">35.00</text>
<text x="971" y="486.1" font-size="8.5" fill="#b4b4b4" font-weight="400" textLength="20.8" lengthAdjust="spacingAndGlyphs">20.00</text>
<rect x="947.6" y="441.9" width="17.4" height="11.2" rx="1.5" fill="#ffeb3b"/>
<rect x="965" y="441.9" width="29.7" height="11.2" rx="1.5" fill="#ffeb3b"/>
<rect x="964.6" y="441.9" width="0.8" height="11.2" fill="#b8a72a"/>
<text x="950.6" y="450.6" font-size="8.5" fill="#131722" textLength="11.8" lengthAdjust="spacingAndGlyphs">RSI</text>
<text x="971" y="450.6" font-size="8.5" fill="#131722" textLength="20.8" lengthAdjust="spacingAndGlyphs">48.24</text>
<rect x="922.8" y="497" width="42.2" height="10.5" rx="1.5" fill="#26a69a"/>
<rect x="965" y="497" width="44.5" height="10.5" rx="1.5" fill="#26a69a"/>
<rect x="964.6" y="497" width="0.8" height="10.5" fill="#1b7a71"/>
<text x="925.6" y="505.3" font-size="8.5" fill="#ffffff" textLength="36.8" lengthAdjust="spacingAndGlyphs">Histogram</text>
<text x="970.6" y="505.3" font-size="8.5" fill="#ffffff" textLength="35.4" lengthAdjust="spacingAndGlyphs">0.000020</text>
<text x="108.75" y="534" font-size="8.3" font-weight="400" fill="#b8b8b8" textLength="12.5" lengthAdjust="spacingAndGlyphs">Oct</text>
<text x="307.5" y="534" font-size="8.3" font-weight="400" fill="#b8b8b8" textLength="13.5" lengthAdjust="spacingAndGlyphs">Nov</text>
<text x="500" y="534" font-size="8.3" font-weight="400" fill="#b8b8b8" textLength="13.75" lengthAdjust="spacingAndGlyphs">Dec</text>
<text x="696.25" y="534" font-size="8.3" font-weight="700" fill="#e0e0e0" textLength="19.25" lengthAdjust="spacingAndGlyphs">2026</text>
<text x="898.3" y="534" font-size="8.3" font-weight="400" fill="#b8b8b8" textLength="13" lengthAdjust="spacingAndGlyphs">Feb</text>
<text x="6.75" y="13.3" font-size="8" fill="#e8e8e8" stroke="#e8e8e8" stroke-width="0.15" textLength="245.25" lengthAdjust="spacingAndGlyphs">AhmadPro created with TradingView.com, Dec 17, 2025 19:39 UTC+4</text>
<text x="11.75" y="29.5" font-size="8" fill="#c4c4c4" textLength="115.25" lengthAdjust="spacingAndGlyphs">PENGU / TetherUS · 4h · Binance</text>
<text x="132.3" y="29.5" font-size="8" fill="#c4c4c4" textLength="5.6" lengthAdjust="spacingAndGlyphs">O</text>
<text x="138" y="29.5" font-size="8" fill="#0c9a84" textLength="34.5" lengthAdjust="spacingAndGlyphs">0.009844</text>
<text x="177.8" y="29.5" font-size="8" fill="#c4c4c4" textLength="5.4" lengthAdjust="spacingAndGlyphs">H</text>
<text x="183.7" y="29.5" font-size="8" fill="#0c9a84" textLength="30.2" lengthAdjust="spacingAndGlyphs">0.010711</text>
<text x="218.8" y="29.5" font-size="8" fill="#c4c4c4" textLength="4.2" lengthAdjust="spacingAndGlyphs">L</text>
<text x="222.6" y="29.5" font-size="8" fill="#0c9a84" textLength="34.5" lengthAdjust="spacingAndGlyphs">0.009734</text>
<text x="261.3" y="29.5" font-size="8" fill="#c4c4c4" textLength="5.4" lengthAdjust="spacingAndGlyphs">C</text>
<text x="266.5" y="29.5" font-size="8" fill="#0c9a84" textLength="32" lengthAdjust="spacingAndGlyphs">0.010351</text>
<text x="303" y="29.5" font-size="8" fill="#0c9a84" textLength="73" lengthAdjust="spacingAndGlyphs">+0.000507 (+5.15%)</text>
<text x="11.6" y="435.7" font-size="8" fill="#c4c4c4" textLength="50.2" lengthAdjust="spacingAndGlyphs">RSI (14, close)</text>
<text x="66.4" y="435.7" font-size="8" fill="#f5e14a" stroke="#f5e14a" stroke-width="0.15" textLength="20.8" lengthAdjust="spacingAndGlyphs">48.24</text>
<text x="11.75" y="500.1" font-size="8" fill="#c4c4c4" textLength="74" lengthAdjust="spacingAndGlyphs">MACD (12, 26, close)</text>
<text x="90.5" y="500.1" font-size="8" fill="#26a69a" textLength="34.5" lengthAdjust="spacingAndGlyphs">0.000020</text>
<g transform="translate(7.3 551.03) scale(0.517)" fill="#dcdcdc"><path d="M14 22H7V11H0V4h14v18zM28 22h-8l7.5-18h8L28 22z"/><circle cx="20" cy="8" r="4"/></g>
<text x="31" y="562.4" font-size="13.4" font-weight="400" stroke="#dcdcdc" stroke-width="0.75" stroke-linejoin="round" fill="#dcdcdc" textLength="75.9" lengthAdjust="spacingAndGlyphs">TradingView</text>
</svg>
</body></html>
